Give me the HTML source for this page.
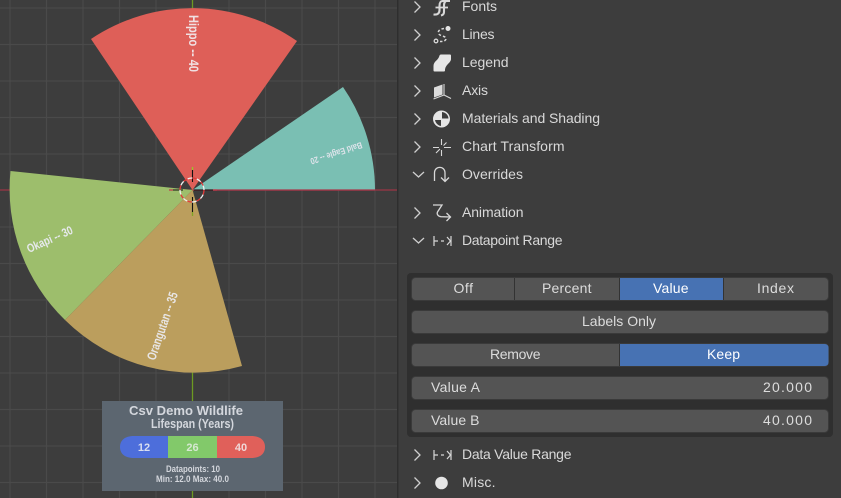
<!DOCTYPE html>
<html><head><meta charset="utf-8">
<style>
html,body{margin:0;padding:0;background:#3d3d3d;width:841px;height:498px;overflow:hidden}
svg{display:block;position:absolute;left:0;top:0}
text{font-family:"Liberation Sans",sans-serif}
.p{font-size:14px;fill:#d9d9d9}
.b{font-size:14px;fill:#dcdcdc;text-anchor:start}
.w{fill:#fff}
.i{fill:none;stroke:#d8d8d8;stroke-width:1.3}
.c{fill:none;stroke:#cfcfcf;stroke-width:1.3}
</style></head><body>
<svg width="841" height="498" viewBox="0 0 841 498" xmlns="http://www.w3.org/2000/svg">
<defs><filter id="bl" x="-5%" y="-5%" width="110%" height="110%"><feGaussianBlur stdDeviation="0.25"/></filter></defs>
<rect width="841" height="498" fill="#3d3d3d"/>
<!-- grid -->
<g stroke="#4a4a4a" stroke-width="1.2">
<path d="M10 0V498M46.500 0V498M83 0V498M119.500 0V498M156 0V498M229 0V498M265.500 0V498M302 0V498M338.500 0V498M375 0V498"/>
<path d="M0 8H397M0 44.500H397M0 81H397M0 117.500H397M0 154H397M0 227H397M0 263.500H397M0 300H397M0 336.500H397M0 373H397M0 409.500H397M0 446H397M0 482.500H397"/>
</g>
<path d="M0 190H397" stroke="#9c3546" stroke-width="1.300"/>
<path d="M192.500 0V498" stroke="#6c9a22" stroke-width="1.300"/>
<rect x="397" y="0" width="1.500" height="498" fill="#2e2e2e"/>
<!-- pie -->
<path d="M192.500 190L91 39A182.500 182.500 0 0 1 297 41Z" fill="#de5f58"/>
<path d="M192.500 190L343 87A182.500 182.500 0 0 1 375 190Z" fill="#7abfb3"/>
<path d="M192.500 190L10.500 171A182.500 182.500 0 0 0 65 320Z" fill="#9dbe6c"/>
<path d="M192.500 190L65 320A182.500 182.500 0 0 0 242 366Z" fill="#bb9e5d"/>
<path d="M192.500 190H375" stroke="#a8384a" stroke-width="1.300"/>
<!-- labels -->
<g filter="url(#bl)">
<text transform="translate(189,15) rotate(90)" font-size="14" font-weight="bold" fill="#f0e0e2" textLength="57" lengthAdjust="spacingAndGlyphs">Hippo -- 40</text>
<text transform="translate(361,142) rotate(162)" font-size="9" font-weight="bold" fill="#dde3ea" textLength="54" lengthAdjust="spacingAndGlyphs">Bald Eagle -- 20</text>
<text transform="translate(29,253) rotate(-24)" font-size="12" font-weight="bold" fill="#e6e9ec" textLength="49" lengthAdjust="spacingAndGlyphs">Okapi -- 30</text>
<text transform="translate(155,361) rotate(-71)" font-size="13" font-weight="bold" fill="#e8e6e6" textLength="71" lengthAdjust="spacingAndGlyphs">Orangutan -- 35</text>
</g>
<!-- cursor -->
<path d="M192.500 167V170" stroke="#9bc52a" stroke-width="1.300"/>
<path d="M192.500 212V216" stroke="#7fa524" stroke-width="1.300"/>
<path d="M192.500 170V182M192.500 197V212M173 190H183M194 190H213" stroke="#111" stroke-width="1.100"/>
<path d="M169 190H173M213 190H217" stroke="#c23a4a" stroke-width="1.300"/>
<circle cx="192" cy="190" r="12" fill="none" stroke="#e33b3b" stroke-width="1.300" stroke-dasharray="4.700 4.700"/>
<circle cx="192" cy="190" r="12" fill="none" stroke="#f0f0f0" stroke-width="1.300" stroke-dasharray="4.700 4.700" stroke-dashoffset="4.700"/>
<!-- legend -->
<rect x="102" y="401" width="181" height="90" fill="#5c6670"/>
<g filter="url(#bl)">
<text x="129" y="415" font-size="13" font-weight="bold" fill="#d4d7dd" textLength="114" lengthAdjust="spacingAndGlyphs">Csv Demo Wildlife</text>
<text x="151" y="428" font-size="13" font-weight="bold" fill="#d4d7dd" textLength="83" lengthAdjust="spacingAndGlyphs">Lifespan (Years)</text>
<path d="M168 436V458H134C124 458 120 453 120 447C120 441 124 436 134 436Z" fill="#4d6edb"/>
<rect x="168" y="436" width="49" height="22" fill="#82c96a"/>
<path d="M217 436V458H251C261 458 265 453 265 447C265 441 261 436 251 436Z" fill="#e0605a"/>
<text x="144" y="451" font-size="11" font-weight="bold" fill="#d8def0" text-anchor="middle">12</text>
<text x="192.500" y="451" font-size="11" font-weight="bold" fill="#d6e8d2" text-anchor="middle">26</text>
<text x="241" y="451" font-size="11" font-weight="bold" fill="#f0d8d8" text-anchor="middle">40</text>
<text x="166" y="472" font-size="9" font-weight="bold" fill="#d4d7dd" textLength="54" lengthAdjust="spacingAndGlyphs">Datapoints: 10</text>
<text x="156" y="482" font-size="9" font-weight="bold" fill="#d4d7dd" textLength="73" lengthAdjust="spacingAndGlyphs">Min: 12.0 Max: 40.0</text>
</g>

<!-- panel rows -->
<g>
<text class="p" x="462" y="11" textLength="35">Fonts</text>
<text class="p" x="462" y="39" textLength="32.500">Lines</text>
<text class="p" x="462" y="67" textLength="46.500">Legend</text>
<text class="p" x="462" y="95" textLength="26">Axis</text>
<text class="p" x="462" y="123" textLength="138">Materials and Shading</text>
<text class="p" x="462" y="151" textLength="102.500">Chart Transform</text>
<text class="p" x="462" y="179" textLength="61">Overrides</text>
<text class="p" x="462" y="217" textLength="61.500">Animation</text>
<text class="p" x="462" y="245" textLength="100.500">Datapoint Range</text>
<text class="p" x="462" y="459" textLength="109.500">Data Value Range</text>
<text class="p" x="462" y="487" textLength="33.500">Misc.</text>
</g>
<!-- chevrons -->
<g class="c">
<path d="M414.500 1.500L420 7L414.500 12.500"/>
<path d="M414.500 29.500L420 35L414.500 40.500"/>
<path d="M414.500 57.500L420 63L414.500 68.500"/>
<path d="M414.500 85.500L420 91L414.500 96.500"/>
<path d="M414.500 113.500L420 119L414.500 124.500"/>
<path d="M414.500 141.500L420 147L414.500 152.500"/>
<path d="M413 172L418.500 177L424 172"/>
<path d="M414.500 207.500L420 213L414.500 218.500"/>
<path d="M413 238L418.500 243L424 238"/>
<path d="M414.500 449.500L420 455L414.500 460.500"/>
<path d="M414.500 477.500L420 483L414.500 488.500"/>
</g>
<!-- icons -->
<g class="i">
<!-- fonts -->
<path d="M450 1H443C440 1 439.500 3 439.500 6V10C439.500 13 438 15 433.500 14.500" stroke-width="2.100"/>
<path d="M446 1C444 2 444 4 444 6V12C444 14 443 15 441 15.500" stroke-width="2.100"/>
<path d="M435.500 7.500H448" stroke-width="1.800"/>
<!-- lines -->
<path d="M444 28.500C440 29 437.500 31 438.500 33.500C439.500 36 446 36 446 38.500C446 41 443 41.500 440 41.500" stroke-dasharray="2.600 2" stroke-width="1.500"/>
<circle cx="436" cy="41" r="1.800"/>
<!-- axis -->
<path d="M444 84V95M444 95L433.500 99M444 95L451 98.500" stroke-width="1.100"/>
<!-- chart transform -->
<path d="M433 147.500H439M444 147.500H451M441.500 139V145M441.500 150V156M436 153L440 149M443.500 145.500L446.500 142.500" stroke-width="1.100"/>
<!-- overrides -->
<path d="M434.500 181V173C434.500 165.500 445 165.500 445 173V181.500M441 177.500L445 181.500L449 177.500" stroke-width="1.300"/>
<!-- animation -->
<path d="M433 205H442L437.500 212C436.500 214 438 216.500 441 216.700L450 217M446.500 213L450.500 217L446.500 221" stroke-width="1.300"/>
<!-- ranges -->
<path d="M434 236V246M434 241H438M441 241H444M447 237L450.500 241L447 245M451 236V246" stroke-width="1.200"/>
<path d="M434 450V460M434 455H438M441 455H444M447 451L450.500 455L447 459M451 450V460" stroke-width="1.200"/>
</g>
<path d="M439.500 55.500Q439.800 54.500 441 54.500H450Q451 54.500 451 55.500V59C451 63 445 64.500 445 70.500Q445 71.500 444 71.500H434.500Q433.500 71.500 433.500 70.500V66C433.500 61 438.500 60.500 439.500 55.500Z" fill="#e6e6e6"/>
<circle cx="448" cy="28.500" r="2.500" fill="#e6e6e6"/>
<path d="M434 87.500L442.500 84.500V94.500L434 97.500Z" fill="#dcdcdc"/>
<circle cx="441.500" cy="119" r="8.500" fill="#e6e6e6"/>
<path d="M442 112A7 7 0 0 1 448.500 118.500H442ZM441 120V126A7 7 0 0 1 435 120Z" fill="#3d3d3d"/>
<circle cx="441.500" cy="483" r="6.300" fill="#e6e6e6"/>
<!-- box -->
<rect x="407" y="273" width="426" height="164" rx="4" fill="#2f2f2f"/>
<g fill="#545454" stroke="#3a3a3a" stroke-width="1">
<rect x="411.500" y="277.500" width="417" height="23" rx="4"/>
<rect x="411.500" y="310.500" width="417" height="23" rx="4"/>
<rect x="411.500" y="343.500" width="417" height="23" rx="4"/>
<rect x="411.500" y="376.500" width="417" height="23" rx="4"/>
<rect x="411.500" y="409.500" width="417" height="23" rx="4"/>
</g>
<rect x="620" y="278" width="103" height="22" fill="#4772b3"/>
<path d="M620 344H824.500Q828.500 344 828.500 348V362Q828.500 366 824.500 366H620Z" fill="#4772b3"/>
<path d="M514.500 278V300M619.500 278V300M723.500 278V300M619.500 344V366" stroke="#333" stroke-width="1"/>
<g class="b">
<text class="b" x="453.500" y="293" textLength="19.500">Off</text>
<text class="b" x="542" y="293" textLength="49.500">Percent</text>
<text class="b w" x="653" y="293" textLength="35.500">Value</text>
<text class="b" x="757" y="293" textLength="37">Index</text>
<text class="b" x="582" y="326" textLength="74">Labels Only</text>
<text class="b" x="490" y="359" textLength="50.500">Remove</text>
<text class="b w" x="707" y="359" textLength="33">Keep</text>
<text class="b" x="431" y="392" textLength="49">Value A</text>
<text class="b" x="431" y="425" textLength="48.500">Value B</text>
<text class="b" x="763" y="392" textLength="49">20.000</text>
<text class="b" x="763" y="425" textLength="49">40.000</text>
</g>
</svg>
</body></html>
